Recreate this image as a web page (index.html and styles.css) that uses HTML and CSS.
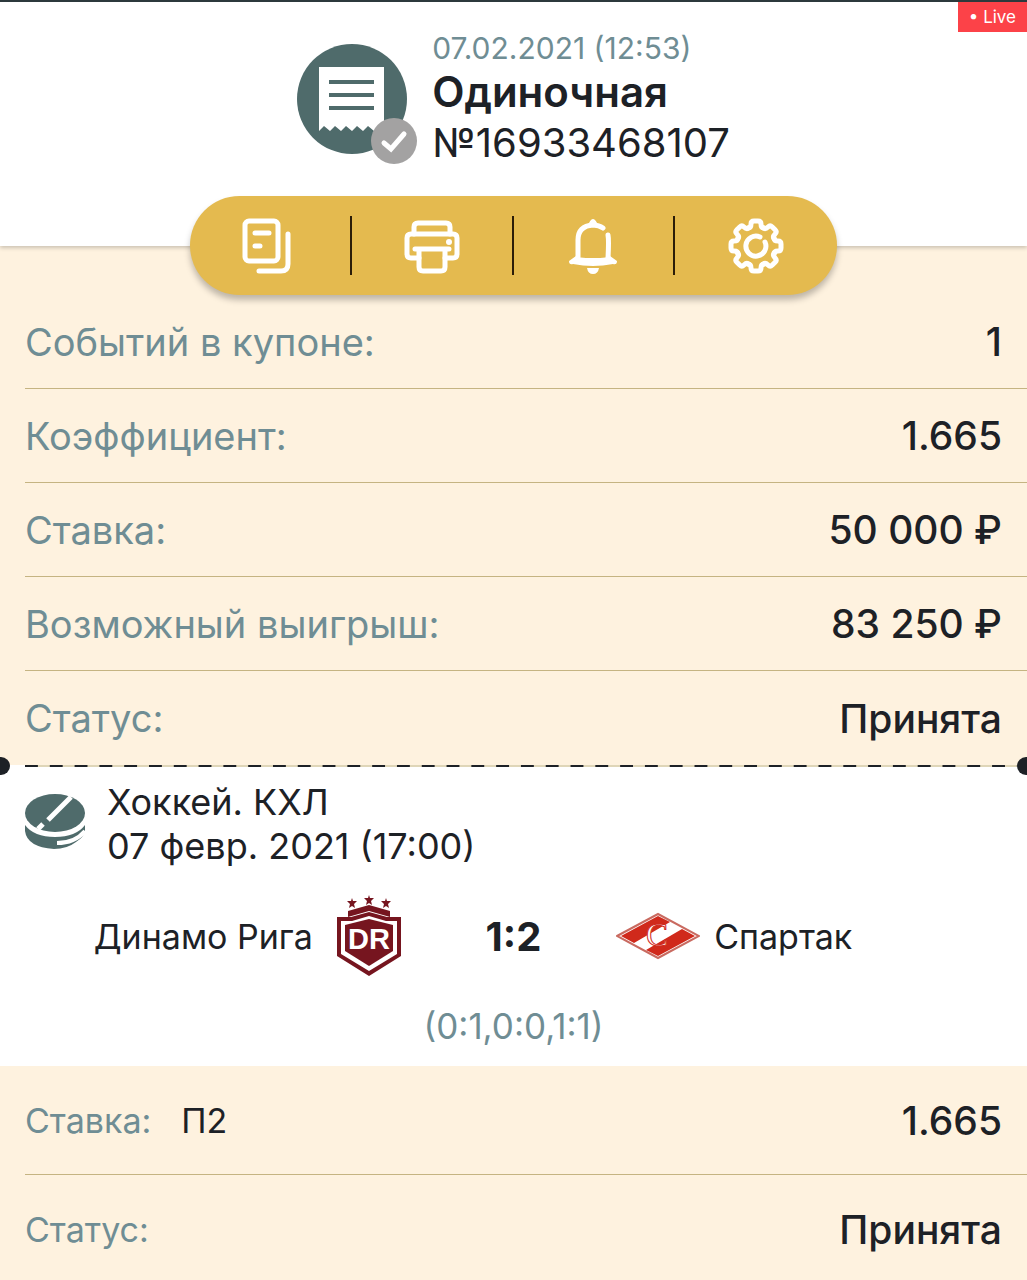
FILE: index.html
```
<!DOCTYPE html>
<html lang="ru">
<head>
    <meta charset="UTF-8">
    <meta name="viewport" content="width=device-width, initial-scale=1.0">
    <title>Купон</title>
    <link rel="stylesheet" href="styles.css">
</head>
<body>

<header class="coupon-header">
    <span class="live">• Live</span>
    <div class="coupon-icon">
        <svg width="120" height="120" viewBox="0 0 120 120" aria-hidden="true">
            <circle cx="55" cy="55" r="55" fill="#4f6b6b"/>
            <path d="M22 23H87V87L82 82L77 87L71 82L66 87L60 82L55 87L49 82L44 87L38 82L33 87L27 82L22 87Z" fill="#fff"/>
            <path d="M32 38H77M32 51H77M32 64H77" stroke="#4f6b6b" stroke-width="4"/>
            <circle cx="97" cy="97" r="23" fill="#a3a2a2"/>
            <path d="M87 99L94 105L107 90" fill="none" stroke="#fff" stroke-width="5" stroke-linecap="round"/>
        </svg>
    </div>
    <div class="coupon-title">
        <p class="coupon-date">07.02.2021 (12:53)</p>
        <h1>Одиночная</h1>
        <p class="coupon-number">№16933468107</p>
    </div>
</header>

<!-- Панель действий -->
<nav class="toolbar">
    <button type="button" aria-label="Копировать">
        <svg class="shift" width="56" height="56" viewBox="0 0 56 56">
            <rect x="6" y="3" width="33" height="40" rx="4"/>
            <path d="M16 15H30M16 28H21M49 16V46Q49 53 42 53H20"/>
        </svg>
    </button>
    <button type="button" aria-label="Печать">
        <svg width="56" height="56" viewBox="0 0 56 56">
            <path d="M10 16V9Q10 5 14 5H42Q46 5 46 9V16"/>
            <path d="M15 40H7Q3 40 3 36V20Q3 16 7 16H49Q53 16 53 20V36Q53 40 49 40H41"/>
            <path d="M11 31H45M15 31V49Q15 53 19 53H37Q41 53 41 49V31"/>
            <circle cx="45" cy="24" r="3" class="solid"/>
        </svg>
    </button>
    <button type="button" aria-label="Уведомления">
        <svg width="56" height="56" viewBox="0 0 56 56">
            <path d="M43 17Q44 22 43 40M13 39V22Q13 8 28 7Q34 7 38 10"/>
            <path class="solid" d="M24 5Q28 -3 32 5L33 9H23ZM11 38Q12 40 28 40T45 38L52 43Q52 47 48 46Q28 50 8 46Q4 47 4 43ZM22 50H34Q33 56 28 56T22 50Z"/>
        </svg>
    </button>
    <button type="button" aria-label="Настройки">
        <svg width="56" height="56" viewBox="0 0 56 56">
            <defs>
                <path id="tooth" d="M-8 -18Q-5 -18 -5 -22Q-5 -25 -2 -25H2Q5 -25 5 -22Q5 -18 8 -18"/>
            </defs>
            <g transform="translate(28 28)">
                <use href="#tooth"/>
                <use href="#tooth" transform="rotate(45)"/>
                <use href="#tooth" transform="rotate(90)"/>
                <use href="#tooth" transform="rotate(135)"/>
                <use href="#tooth" transform="rotate(180)"/>
                <use href="#tooth" transform="rotate(225)"/>
                <use href="#tooth" transform="rotate(270)"/>
                <use href="#tooth" transform="rotate(315)"/>
                <path d="M9 -4A10 10 0 1 1 4 -9"/>
            </g>
        </svg>
    </button>
</nav>

<main>
    <dl class="summary">
        <div class="row"><dt>Событий в купоне:</dt><dd>1</dd></div>
        <div class="row"><dt>Коэффициент:</dt><dd>1.665</dd></div>
        <div class="row"><dt>Ставка:</dt><dd>50 000 ₽</dd></div>
        <div class="row"><dt>Возможный выигрыш:</dt><dd>83 250 ₽</dd></div>
        <div class="row"><dt>Статус:</dt><dd>Принята</dd></div>
    </dl>

    <!-- Событие -->
    <section class="event">
        <div class="tear"></div>
        <div class="event-info">
            <svg width="62" height="58" viewBox="0 0 62 58" aria-hidden="true">
                <ellipse cx="31" cy="20" rx="30" ry="19" fill="#4f6b6b"/>
                <path d="M1 32Q10 44 31 44T61 32V38Q60 44 52 49Q43 56 30 56Q3 54 1 38Z" fill="#4f6b6b"/>
                <path d="M33 50Q51 50 61 38" fill="none" stroke="#fff" stroke-width="4"/>
                <path d="M47 4L24 27M19 31L14 36" stroke="#fff" stroke-width="5"/>
            </svg>
            <div>
                <h2>Хоккей. КХЛ</h2>
                <p>07 февр. 2021 (17:00)</p>
            </div>
        </div>
        <div class="teams">
            <div class="team home">
                <span>Динамо Рига</span>
                <svg width="84" height="84" viewBox="0 0 84 84" aria-hidden="true">
                    <defs>
                        <path id="star" d="M0 -5L1 -2H5L2 1L3 5L0 3L-3 5L-2 1L-5 -2H-1Z"/>
                    </defs>
                    <g fill="#76151f">
                        <use href="#star" x="25" y="9"/>
                        <use href="#star" x="42" y="6"/>
                        <use href="#star" x="59" y="9"/>
                        <path d="M21 17L42 11L63 17V23L42 17L21 23Z"/>
                        <path d="M10 23H24L42 18L60 23H74V62L42 82L10 62Z"/>
                    </g>
                    <path d="M14 27H25L42 22L59 27H70V60L42 77L14 60Z" fill="#fff"/>
                    <path d="M18 31L42 25L66 31V57L42 72L18 57Z" fill="#76151f"/>
                    <text x="21" y="55">D</text>
                    <text x="42" y="55">R</text>
                </svg>
            </div>
            <strong class="score">1:2</strong>
            <div class="team away">
                <svg width="84" height="48" viewBox="0 0 84 48" aria-hidden="true">
                    <path d="M1 24L42 2L83 24L42 46Z" fill="#fff" stroke="#c96a60" stroke-width="2"/>
                    <path d="M5 24L42 4L54 10L18 31ZM30 38L66 17L79 24L42 44Z" fill="#d0291b"/>
                    <text class="mark" x="30" y="34">C</text>
                </svg>
                <span>Спартак</span>
            </div>
        </div>
        <p class="periods">(0:1,0:0,1:1)</p>
    </section>

    <dl class="bet">
        <div class="row"><dt>Ставка:</dt><dd class="pick">П2</dd><dd>1.665</dd></div>
        <div class="row"><dt>Статус:</dt><dd>Принята</dd></div>
    </dl>
</main>

</body>
</html>
```
FILE: styles.css
```
* {
    box-sizing: border-box;
}

body {
    font-family: Inter, 'Liberation Sans', sans-serif;
    background-color: #fef2df;
    color: #1d2126;
    margin: 0;
}

h1, h2, p, dl, dd {
    margin: 0;
    font-weight: normal;
}

.coupon-header {
    position: relative;
    display: flex;
    justify-content: center;
    gap: 15px;
    padding: 28px 0 78px;
    border-top: 2px solid #2c393c;
    background-color: #fff;
    box-shadow: 0 2px 4px rgba(0, 0, 0, 0.2);
}

.live {
    position: absolute;
    top: 0;
    right: 0;
    padding: 0 11px;
    background-color: #fc4248;
    color: #fff;
    font-size: 17px;
    line-height: 30px;
}

.coupon-icon {
    padding-top: 14px;
}

svg {
    display: block;
    flex: none;
}

.coupon-date {
    color: #6f8d94;
    font-size: 30px;
    line-height: 36px;
}

.coupon-title h1 {
    font-size: 42px;
    font-weight: 600;
    line-height: 52px;
}

.coupon-number {
    font-size: 40px;
    line-height: 50px;
}

/* Панель лежит на границе шапки */
.toolbar {
    position: relative;
    display: grid;
    grid-template-columns: repeat(4, 1fr);
    width: 63%;
    margin: -50px auto 0;
    padding: 20px 0;
    border-radius: 50px;
    background-color: #e4ba4f;
    box-shadow: 0 5px 6px rgba(0, 0, 0, 0.25);
}

.toolbar button {
    display: flex;
    align-items: center;
    justify-content: center;
    height: 59px;
    padding: 0;
    border: none;
    border-right: 2px solid #2b1d08;
    background: none;
    cursor: pointer;
}

.toolbar button:last-child {
    border-right: none;
}

.toolbar svg {
    fill: none;
    stroke: #fff;
    stroke-width: 5px;
    stroke-linecap: round;
    stroke-linejoin: round;
}

.toolbar .shift {
    margin-right: 6px;
}

.toolbar .solid {
    fill: #fff;
    stroke: none;
}

.row {
    display: flex;
    align-items: center;
    justify-content: space-between;
    margin-left: 25px;
    padding-right: 25px;
    border-bottom: 1px solid #c5b482;
}

.row dt {
    color: #6f8d94;
}

.row dd {
    font-size: 39px;
    font-weight: 500;
}

.summary .row {
    height: 94px;
    font-size: 38px;
}

.summary .row:last-child {
    border-bottom: none;
}

.event {
    padding-bottom: 16px;
    background-color: #fff;
}

/* Линия отрыва с кружками по краям */
.tear {
    position: relative;
    height: 2px;
    margin: 0 10px 0 25px;
    background-image: linear-gradient(to right, #1d2126 50%, #dfd6b8 50%);
    background-size: 25px 2px;
    background-repeat: round;
}

.tear::before,
.tear::after {
    content: '';
    position: absolute;
    top: -8px;
    width: 18px;
    height: 18px;
    border-radius: 50%;
    background-color: #1d2126;
}

.tear::before {
    left: -33px;
}

.tear::after {
    right: -18px;
}

.event-info {
    display: flex;
    gap: 21px;
    padding: 13px 24px 0;
    font-size: 36px;
    line-height: 44px;
}

.event-info h2 {
    font-size: 36px;
}

.event-info svg {
    margin-top: 13px;
}

.teams {
    display: grid;
    grid-template-columns: 1fr 20% 1fr;
    align-items: center;
    margin-top: 26px;
    font-size: 34px;
}

.team {
    display: flex;
    align-items: center;
    gap: 14px;
}

.home {
    justify-content: flex-end;
}

.team text {
    fill: #fff;
    font: bold 29px 'Liberation Sans', sans-serif;
}

.team .mark {
    stroke: #d0291b;
    stroke-width: 1px;
    font: 33px 'Liberation Serif', serif;
}

.score {
    font-size: 40px;
    text-align: center;
}

.periods {
    margin-top: 24px;
    color: #6f8d94;
    font-size: 35px;
    line-height: 48px;
    text-align: center;
}

.bet .row {
    height: 109px;
    font-size: 34px;
}

.bet .row:last-child {
    border-bottom: none;
}

.bet dt {
    margin-right: 30px;
}

.bet .pick {
    margin-right: auto;
    font-size: 34px;
    font-weight: normal;
}
```
